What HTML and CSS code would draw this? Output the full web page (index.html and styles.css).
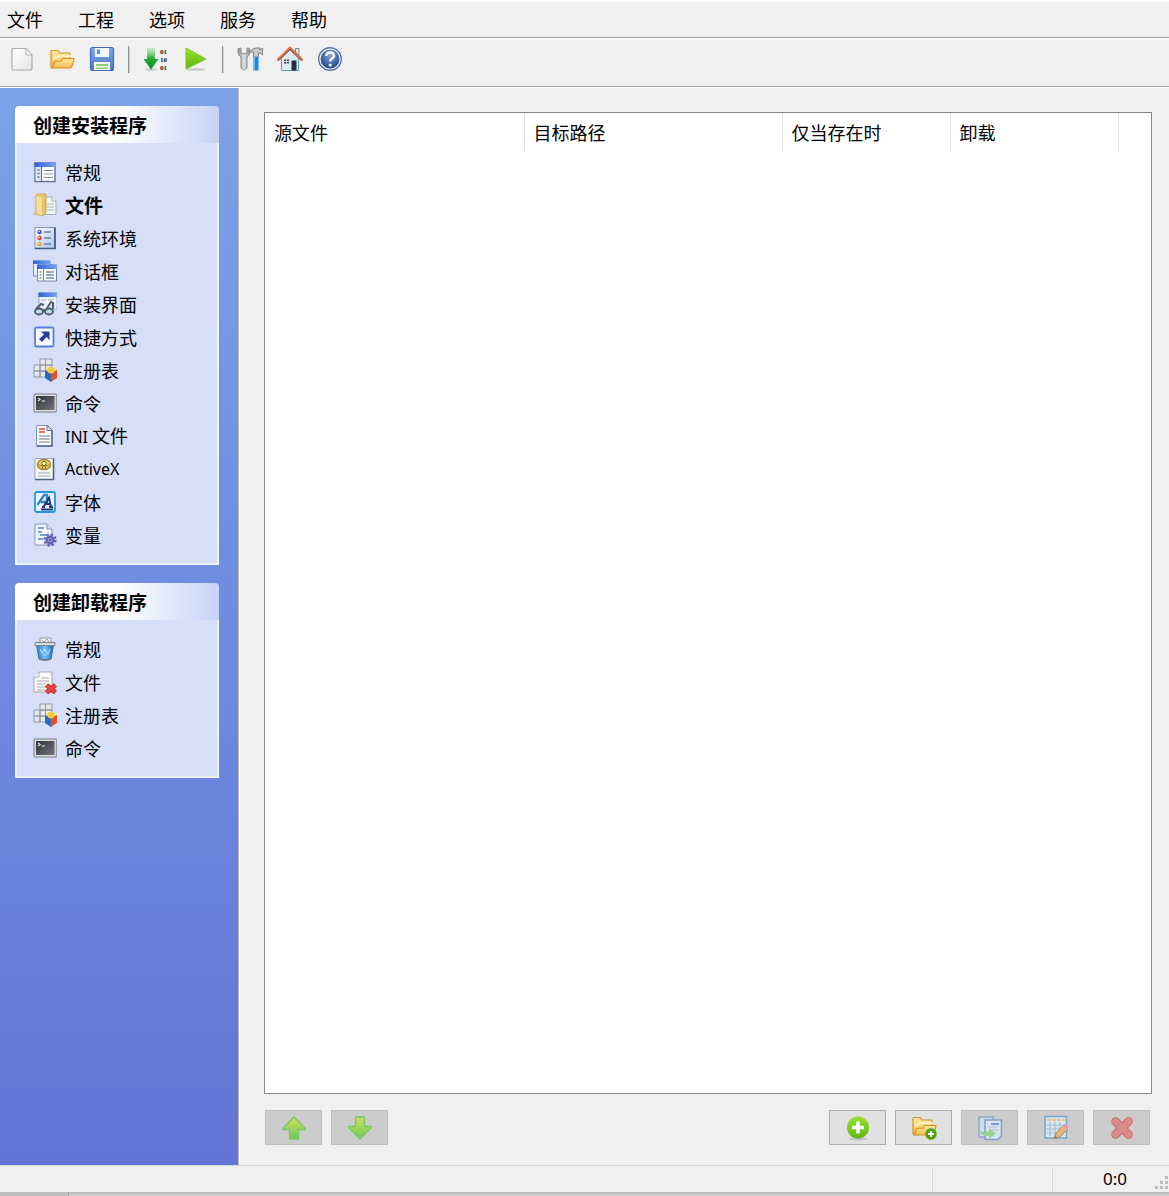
FILE: index.html
```html
<!DOCTYPE html>
<html lang="zh-CN">
<head>
<meta charset="utf-8">
<meta name="viewport" content="width=device-width, initial-scale=1">
<title>创建安装程序</title>
<link rel="stylesheet" href="styles.css">
</head>
<body>
<svg class="sprite" width="0" height="0" aria-hidden="true">
  <defs>
    <linearGradient id="g-paper" x1="0" y1="0" x2="1" y2="1"><stop offset="0" stop-color="#fff"/><stop offset="1" stop-color="#e6e6e6"/></linearGradient>
    <linearGradient id="g-folder" x1="0" y1="0" x2="0" y2="1"><stop offset="0" stop-color="#ffe9a3"/><stop offset="1" stop-color="#f7bd50"/></linearGradient>
    <linearGradient id="g-leaf" x1="0" y1="0" x2="1" y2="0"><stop offset="0" stop-color="#fbe6a6"/><stop offset="1" stop-color="#e3b95a"/></linearGradient>
    <linearGradient id="g-blue" x1="0" y1="0" x2="0" y2="1"><stop offset="0" stop-color="#7fa8e6"/><stop offset="1" stop-color="#4a78c8"/></linearGradient>
    <linearGradient id="g-down" x1="0" y1="0" x2="0" y2="1"><stop offset="0" stop-color="#8be08e" stop-opacity=".4"/><stop offset=".5" stop-color="#1fae31"/><stop offset="1" stop-color="#128a22"/></linearGradient>
    <linearGradient id="g-play" x1="0" y1="0" x2="0" y2="1"><stop offset="0" stop-color="#9be02c"/><stop offset="1" stop-color="#5cb811"/></linearGradient>
    <linearGradient id="g-steel" x1="0" y1="0" x2="1" y2="0"><stop offset="0" stop-color="#8a8a8a"/><stop offset=".5" stop-color="#e2e2e2"/><stop offset="1" stop-color="#8a8a8a"/></linearGradient>
    <linearGradient id="g-title" x1="0" y1="0" x2="1" y2="0"><stop offset="0" stop-color="#2f62d8"/><stop offset="1" stop-color="#78a4f2"/></linearGradient>
    <linearGradient id="g-arrow" x1="0" y1="0" x2="0" y2="1"><stop offset="0" stop-color="#d3e05a"/><stop offset="1" stop-color="#6cc95f"/></linearGradient>
    <linearGradient id="g-list" x1="0" y1="0" x2="1" y2="1"><stop offset="0" stop-color="#fff"/><stop offset="1" stop-color="#a9c4ee"/></linearGradient>
    <linearGradient id="g-screen" x1="0" y1="0" x2="1" y2="1"><stop offset="0" stop-color="#2f3138"/><stop offset="1" stop-color="#73757e"/></linearGradient>
    <linearGradient id="g-bin" x1="0" y1="0" x2="1" y2="0"><stop offset="0" stop-color="#2e7bd0"/><stop offset=".5" stop-color="#6cc0f7"/><stop offset="1" stop-color="#2064b8"/></linearGradient>
    <radialGradient id="g-help" cx=".5" cy=".3" r=".7"><stop offset="0" stop-color="#7fa5da"/><stop offset="1" stop-color="#1f4488"/></radialGradient>
  </defs>

  <symbol id="i-new" viewBox="0 0 26 26"><path d="M4 2.500H17L23 9V22Q23 24 21 24H4.500Q3 24 3 22.500V3.500Q3 2.500 4 2.500Z" fill="url(#g-paper)" stroke="#aaa" stroke-width="1.200"/><path d="M17 2.500V9H23Z" fill="#fff" stroke="#b5b5b5"/></symbol>

  <symbol id="i-open" viewBox="0 0 26 26"><path d="M2 21V5.500Q2 4.500 3 4.500H9L11 7H20Q21 7 21 8V21Z" fill="url(#g-folder)" stroke="#d4922c" stroke-width="1.200"/><path d="M4 13L10 10H22" fill="none" stroke="#fff3c4" stroke-width="2"/><path d="M3 22Q5 20 5.500 15.500L12 15L14 12.500H25Q24 20 21.500 22Z" fill="url(#g-folder)" stroke="#d4922c" stroke-width="1.200"/></symbol>

  <symbol id="i-save" viewBox="0 0 26 26"><rect x="1.500" y="1.500" width="23" height="23" rx="2" fill="url(#g-blue)" stroke="#3f6cb8" stroke-width="1.200"/><path d="M6 2H20V11H6Z" fill="#f3f7fe"/><path d="M8 3.500H11V8H8Z" fill="#5f8cd6"/><path d="M5 16H21V24H5Z" fill="#f4f8f1"/><path d="M7 18H19V20H7ZM7 21.500H19V23H7Z" fill="#8ccb72"/></symbol>

  <symbol id="i-run" viewBox="0 0 26 26"><ellipse cx="13" cy="23.500" rx="10" ry="1.500" fill="#000" opacity=".15"/><path d="M3 2L23 13L3 23Z" fill="url(#g-play)" stroke="#7ccb1e" stroke-linejoin="round"/></symbol>

  <symbol id="i-tools" viewBox="0 0 26 26"><path d="M1.500 2.500Q-.5 8 4 11V22Q7 26 10 22V11Q14.500 8 12.500 2.500L10 2V6.500L7 8L4 6.500V2Z" fill="url(#g-steel)" stroke="#8b8b8b"/><path d="M13 6Q15 2 19 2H23V4L25.500 2V9L23 7H21.500V11H16.500V6Z" fill="#c8c8c8" stroke="#858585"/><path d="M16.500 11H21.500V24.500H16.500Z" fill="#1c86ee"/><path d="M16.500 11H18V24.500H16.500Z" fill="#6bc0ff"/></symbol>

  <symbol id="i-home" viewBox="0 0 26 26"><path d="M18.500 2.500H22V9H18.500Z" fill="#e8e2de" stroke="#98806f"/><path d="M4.500 12L13 4L21.500 12V24.500H4.500Z" fill="#dceaf5" stroke="#5c9ed0"/><path d="M1.500 13.500L13 2L24.500 13.500" fill="none" stroke="#b9552c" stroke-width="2.600" stroke-linecap="round"/><path d="M1.500 13L13 1.700L24.500 13" fill="none" stroke="#eea47c" stroke-width=".8"/><path d="M14.500 14.500H19.500V24.500H14.500Z" fill="#252e3a"/><path d="M7 13.500H12V17.500H7Z" fill="#3a4a5a"/><path d="M9.500 13.500V17.500M7 15.500H12" stroke="#dde"/></symbol>

  <symbol id="i-help" viewBox="0 0 26 26"><circle cx="13" cy="13" r="11.300" fill="#fff" stroke="#5475ab" stroke-width="1.400"/><circle cx="13" cy="13" r="9.500" fill="url(#g-help)"/><path d="M9.500 10Q9.500 6.500 13.200 6.500T16.800 9.700Q16.800 11.800 14.500 12.800Q13.200 13.500 13.200 15.500" fill="none" stroke="#fff" stroke-width="2.500"/><circle cx="13.200" cy="19" r="1.600" fill="#fff"/></symbol>

  <symbol id="i-form" viewBox="0 0 24 24"><rect x="2" y="3" width="20" height="18.500" fill="#fff" stroke="#5c7396" stroke-width="1.400"/><path d="M1.500 2.500H22.500V7H1.500Z" fill="url(#g-title)"/><path d="M2.700 7H8V21H2.700Z" fill="#dfe8f6"/><path d="M8.500 7V21" stroke="#4b6a97"/><path d="M4.500 10H6.500M4.500 13.500H6.500M4.500 17H6.500" stroke="#4e6fa5" stroke-width="1.500"/><path d="M10.500 10.500H20M10.500 14H20M10.500 17.500H20" stroke="#8294b0" stroke-width="1.200"/></symbol>

  <symbol id="i-files" viewBox="0 0 24 24"><path d="M10 4H19L23 8V21.500H10Z" fill="#edf5f3" stroke="#98b4b4"/><path d="M19 4V8H23" fill="#fff" stroke="#98b4b4"/><path d="M14 11H21M14 14H21M14 17H21" stroke="#9bbcbd"/><path d="M0 21L4 17V22Z" fill="#aeb0a0" opacity=".7"/><path d="M3 2L5 1H13V20L10 23L3 21Z" fill="url(#g-leaf)" stroke="#d2a84e"/><path d="M3 2L9.500 4V23L3 21Z" fill="#f7dd97" stroke="#dcba6b"/></symbol>

  <symbol id="i-env" viewBox="0 0 24 24"><rect x="2" y="1.500" width="20" height="21" fill="url(#g-list)" stroke="#8398b6"/><path d="M22 1.500V22.500H2" fill="none" stroke="#3f5c85" stroke-width="1.700"/><circle cx="6.500" cy="6" r="2.200" fill="#4646dc"/><circle cx="6.500" cy="12" r="2.200" fill="#e0432b"/><circle cx="6.500" cy="18" r="2.200" fill="#dda32b"/><circle cx="6" cy="5.500" r=".8" fill="#fff"/><circle cx="6" cy="11.500" r=".8" fill="#fff"/><circle cx="6" cy="17.500" r=".8" fill="#fff"/><path d="M11 6H18M11 12H18M11 18H18" stroke="#6f7f9b" stroke-width="1.300"/></symbol>

  <symbol id="i-dialog" viewBox="0 0 24 24"><path d="M.500 2H17V17H.500Z" fill="#e7effc" stroke="#6d90d0"/><path d="M0 1.500H17V5H0Z" fill="url(#g-title)"/><path d="M4.500 6H23.500V22H4.500Z" fill="#fff" stroke="#6683b0"/><path d="M4 5.500H24V10H4Z" fill="url(#g-title)"/><path d="M10.500 10V22" stroke="#6683b0"/><path d="M6.500 13H8.500M6.500 16H8.500M6.500 19H8.500M13 13H21M13 16H21M13 19H21" stroke="#6f8eb9" stroke-width="1.300"/></symbol>

  <symbol id="i-ui" viewBox="0 0 24 24"><path d="M6 1H24V17H6Z" fill="#eff5ff" stroke="#91abd8"/><path d="M5.500 .500H24V5H5.500Z" fill="url(#g-title)"/><path d="M8 8H13M15 8H21M17 11H22M17 14H22" stroke="#a1b3d2"/><path d="M3 17L8 12L11 13M14 16L18 10L20 11V17" fill="none" stroke="#57606e" stroke-width="2"/><ellipse cx="6" cy="19.500" rx="4" ry="3" fill="#b8ddf2" stroke="#4d5561" stroke-width="1.800"/><ellipse cx="16" cy="19.500" rx="4" ry="3" fill="#b8ddf2" stroke="#4d5561" stroke-width="1.800"/><path d="M10 18.500H12" stroke="#4d5561" stroke-width="2"/></symbol>

  <symbol id="i-shortcut" viewBox="0 0 24 24"><rect x="2" y="2.500" width="18.500" height="19" rx="1.500" fill="#f6f8ff" stroke="#5b7bdd" stroke-width="1.800"/><path d="M8 6.500H16.500V15L13.500 12L9 17L6 14L11 9.500Z" fill="#263e9e"/></symbol>

  <symbol id="i-registry" viewBox="0 0 24 24"><g fill="#e5e9ee" stroke="#8c97a8"><path d="M7 1H12.500V7H7ZM12.500 1H19V7H12.500ZM1 7H7V13H1ZM7 7H12.500V13H7ZM12.500 7H19V13H12.500ZM1 13H7V19H1ZM7 13H12.500V19H7Z"/></g><path d="M12 12L18 9L24 12L18 15Z" fill="#ffdc54"/><path d="M12 12L18 15V24L12 20Z" fill="#3564bd"/><path d="M18 15L24 12V20L18 24Z" fill="#e65024"/><circle cx="18" cy="12" r="3.500" fill="#f7c93d"/></symbol>

  <symbol id="i-command" viewBox="0 0 24 24"><rect x="1" y="3" width="22.500" height="18" rx="1" fill="#dedfe0" stroke="#999ca3" stroke-width="1.500"/><rect x="3" y="5" width="18.500" height="14" fill="url(#g-screen)"/><path d="M5 7L7 8.500L5 10M8.500 10H12" fill="none" stroke="#eee" stroke-width="1.200"/></symbol>

  <symbol id="i-ini" viewBox="0 0 24 24"><path d="M3.500 1.500H14L19 6.500V22H3.500Z" fill="#fbfbfe" stroke="#8293b2"/><path d="M14 1.500L19 6.500V22H4" fill="none" stroke="#4b6489" stroke-width="1.400"/><path d="M14 1.500V6.500H19" fill="#dbe4f2" stroke="#5a7194"/><path d="M6 5H12M6 8H12" stroke="#ef7457" stroke-width="2"/><path d="M6 12H17M6 15H17M6 18H17" stroke="#9aa6b8" stroke-width="1.300"/></symbol>

  <symbol id="i-activex" viewBox="0 0 24 24"><path d="M2 1.500H20.500V22.500H2Z" fill="#f8f9fb" stroke="#9aa7b9"/><path d="M20.500 1.500V22.500H2" fill="none" stroke="#4d6180" stroke-width="1.600"/><ellipse cx="11" cy="7.500" rx="6.500" ry="5" fill="#efd569" stroke="#a98822" stroke-width="1.500"/><circle cx="11" cy="6.500" r="2.200" fill="#fff6ca" stroke="#6f5612"/><path d="M6 8L10 9L9 12M16 8L12 9L13 12" fill="none" stroke="#8b6b17"/><path d="M5 16H17M5 19H17" stroke="#9ba5b3" stroke-width="1.200"/></symbol>

  <symbol id="i-font" viewBox="0 0 24 24"><rect x="2" y="2" width="20" height="20" rx="2" fill="#eef7ff" stroke="#2396e2" stroke-width="1.800"/><path d="M4.500 15L11 5H14V15M8 12H13" fill="none" stroke="#3286d2" stroke-width="2.300"/><path d="M10.500 17L16 7.500L18 17M12 14H18M9 17H12M16 17H20M8 19.500H20" fill="none" stroke="#24367e" stroke-width="1.900"/></symbol>

  <symbol id="i-variable" viewBox="0 0 24 24"><path d="M2 1H14L19 6V22H2Z" fill="#f3f7ff" stroke="#8095bd"/><path d="M14 1V6H19" fill="#d5e0f7" stroke="#8095bd"/><path d="M5 5H11M5 9H9M7 12H15M5 16H10" stroke="#4e81d8" stroke-width="1.600"/><circle cx="17" cy="17" r="5.300" fill="none" stroke="#6565b8" stroke-width="2.600" stroke-dasharray="2.300 1.860"/><circle cx="17" cy="17" r="3.300" fill="#aeb0e8" stroke="#6464b5" stroke-width="2.500"/><circle cx="17" cy="17" r="1.200" fill="#5253a5"/></symbol>

  <symbol id="i-bin" viewBox="0 0 24 24"><path d="M7 1H18V7H7Z" fill="#eef1f3" stroke="#929da8"/><path d="M9 3L11 5L14 2L16 5" fill="none" stroke="#9aa4ad"/><path d="M3.500 8H20.500L18 22Q11 24 6 22Z" fill="url(#g-bin)" stroke="#386a9f"/><path d="M2 5.500H22V8.500H2Z" fill="#dadddf" stroke="#7d8791"/><path d="M7 12L9 16L12 12L15 17L17 12M10 18H14" fill="none" stroke="#c6edff" stroke-width="1.200" opacity=".8"/><path d="M6 22Q12 24 18 22" stroke="#777" fill="none" stroke-width="1.500"/></symbol>

  <symbol id="i-file-remove" viewBox="0 0 24 24"><path d="M6 2H19V22H1V7Z" fill="#fafafa" stroke="#a7a7a7"/><path d="M6 2V7H1" fill="#fff" stroke="#a7a7a7"/><path d="M8 8H16M4 11H16M4 14H13M4 17H12M4 20H12" stroke="#aaa"/><path d="M13.500 15L22.500 22.500M22.500 15L13.500 22.500" stroke="#c4242c" stroke-width="4.800"/><path d="M14 15.500L22 22M22 15.500L14 22" stroke="#f04444" stroke-width="2.800"/></symbol>

  <symbol id="i-up" viewBox="0 0 26 26"><path d="M13 2L24 13V14.500H17.500V24H8.500V14.500H2V13Z" fill="url(#g-arrow)" stroke="#79c865" stroke-width="1.400" stroke-linejoin="round"/></symbol>
  <symbol id="i-down" viewBox="0 0 26 26"><path d="M13 24L24 13V11.500H17.500V2H8.500V11.500H2V13Z" fill="url(#g-arrow)" stroke="#79c865" stroke-width="1.400" stroke-linejoin="round"/></symbol>

  <symbol id="i-add" viewBox="0 0 26 26"><ellipse cx="13" cy="24" rx="10" ry="1.500" fill="#000" opacity=".12"/><circle cx="13" cy="12.500" r="11" fill="url(#g-play)"/><path d="M13 6.500V18.500M7 12.500H19" stroke="#fff" stroke-width="3.600"/></symbol>

  <symbol id="i-folder-add" viewBox="0 0 26 26"><use href="#i-open" x="0" y="-2" width="26" height="26"/><circle cx="20" cy="19" r="5.700" fill="#4e9c13" stroke="#8bc34a" stroke-width=".8"/><path d="M20 16V22M17 19H23" stroke="#fff" stroke-width="1.800"/></symbol>

  <symbol id="i-copy" viewBox="0 0 26 26"><path d="M2 2H16V22H2Z" fill="#ccdaea" stroke="#8ba8cb" stroke-width="1.400"/><path d="M8 5H24.500V21L21 24.500H8Z" fill="#d9e3ef" stroke="#819fc6" stroke-width="1.500"/><path d="M14 9H22" stroke="#779bc8" stroke-width="2"/><path d="M10 12H22M12 15H22" stroke="#b3c5da"/><path d="M2 15Q6 19 12 16V13L19 18.500L12 24V21Q5 22 2 15Z" fill="#98d391"/></symbol>

  <symbol id="i-edit" viewBox="0 0 26 26"><path d="M2 1.500H23.500V23H2Z" fill="#dbe5ed" stroke="#77a7c3" stroke-width="1.500"/><path d="M4 5H22" stroke="#dcbc74" stroke-width="1.600" stroke-dasharray="4 1"/><path d="M3 10H23M3 14H23M3 18H18M7 7V21M12 7V21M17 7V18" stroke="#a0bed4" stroke-width="1.200"/><path d="M11 24L13 18L21 10L25 14L17 22Z" fill="#e5b578" stroke="#a99075"/><path d="M20 11L22.500 8.500L26 12L24 14.500Z" fill="#d8a0b5"/><path d="M11 24L12 20.500L15 23Z" fill="#8b8178"/></symbol>

  <symbol id="i-delete" viewBox="0 0 26 26"><path d="M6.500 6.500L19.500 19.500M19.500 6.500L6.500 19.500" stroke="#c66e70" stroke-width="8.500" stroke-linecap="round"/><path d="M6.500 6.500L19.500 19.500M19.500 6.500L6.500 19.500" stroke="#dc8a8b" stroke-width="6.500" stroke-linecap="round"/></symbol>

  <symbol id="i-grip" viewBox="0 0 14 14"><path d="M10 0H13V3H10ZM5 5H8V8H5ZM10 5H13V8H10ZM0 10H3V13H0ZM5 10H8V13H5ZM10 10H13V13H10Z" fill="#bdbdbd"/></symbol>
</svg>

<div class="app">
  <nav class="menubar" aria-label="菜单">
    <button type="button" class="menu-item">文件</button>
    <button type="button" class="menu-item">工程</button>
    <button type="button" class="menu-item">选项</button>
    <button type="button" class="menu-item">服务</button>
    <button type="button" class="menu-item">帮助</button>
  </nav>

  <div class="toolbar" role="toolbar">
    <button type="button" class="tool" aria-label="新建"><svg class="tool-icon"><use href="#i-new"/></svg></button>
    <button type="button" class="tool" aria-label="打开"><svg class="tool-icon"><use href="#i-open"/></svg></button>
    <button type="button" class="tool" aria-label="保存"><svg class="tool-icon"><use href="#i-save"/></svg></button>
    <span class="tool-sep"></span>
    <button type="button" class="tool" aria-label="编译">
      <svg class="tool-icon" viewBox="0 0 26 26"><ellipse cx="8" cy="23.500" rx="6" ry="1.500" fill="#000" opacity=".15"/><path d="M4 2H12V13H15.500L8 23.500L.5 13H4Z" fill="url(#g-down)"/><g class="bits"><text x="17" y="8">01</text><text x="17" y="16">10</text><text x="17" y="24">01</text></g></svg>
    </button>
    <button type="button" class="tool" aria-label="运行"><svg class="tool-icon"><use href="#i-run"/></svg></button>
    <span class="tool-sep"></span>
    <button type="button" class="tool" aria-label="设置"><svg class="tool-icon"><use href="#i-tools"/></svg></button>
    <button type="button" class="tool" aria-label="主页"><svg class="tool-icon"><use href="#i-home"/></svg></button>
    <button type="button" class="tool" aria-label="帮助"><svg class="tool-icon"><use href="#i-help"/></svg></button>
  </div>

  <div class="workspace">
    <aside class="sidebar">
      <section class="group">
        <h2 class="group-title">创建安装程序</h2>
        <ul class="group-list">
          <li><a class="entry" href="#"><svg class="entry-icon"><use href="#i-form"/></svg>常规</a></li>
          <li><a class="entry entry-current" href="#" aria-current="page"><svg class="entry-icon"><use href="#i-files"/></svg>文件</a></li>
          <li><a class="entry" href="#"><svg class="entry-icon"><use href="#i-env"/></svg>系统环境</a></li>
          <li><a class="entry" href="#"><svg class="entry-icon"><use href="#i-dialog"/></svg>对话框</a></li>
          <li><a class="entry" href="#"><svg class="entry-icon"><use href="#i-ui"/></svg>安装界面</a></li>
          <li><a class="entry" href="#"><svg class="entry-icon"><use href="#i-shortcut"/></svg>快捷方式</a></li>
          <li><a class="entry" href="#"><svg class="entry-icon"><use href="#i-registry"/></svg>注册表</a></li>
          <li><a class="entry" href="#"><svg class="entry-icon"><use href="#i-command"/></svg>命令</a></li>
          <li><a class="entry" href="#"><svg class="entry-icon"><use href="#i-ini"/></svg><span><span class="latin">INI</span> 文件</span></a></li>
          <li><a class="entry" href="#"><svg class="entry-icon"><use href="#i-activex"/></svg><span class="latin">ActiveX</span></a></li>
          <li><a class="entry" href="#"><svg class="entry-icon"><use href="#i-font"/></svg>字体</a></li>
          <li><a class="entry" href="#"><svg class="entry-icon"><use href="#i-variable"/></svg>变量</a></li>
        </ul>
      </section>
      <section class="group">
        <h2 class="group-title">创建卸载程序</h2>
        <ul class="group-list">
          <li><a class="entry" href="#"><svg class="entry-icon"><use href="#i-bin"/></svg>常规</a></li>
          <li><a class="entry" href="#"><svg class="entry-icon"><use href="#i-file-remove"/></svg>文件</a></li>
          <li><a class="entry" href="#"><svg class="entry-icon"><use href="#i-registry"/></svg>注册表</a></li>
          <li><a class="entry" href="#"><svg class="entry-icon"><use href="#i-command"/></svg>命令</a></li>
        </ul>
      </section>
    </aside>

    <main class="content">
      <div class="file-list">
        <table class="file-table">
          <colgroup><col class="col-source"><col class="col-target"><col class="col-flag"><col class="col-flag"><col></colgroup>
          <thead>
            <tr><th scope="col">源文件</th><th scope="col">目标路径</th><th scope="col">仅当存在时</th><th scope="col">卸载</th><td></td></tr>
          </thead>
        </table>
      </div>
      <div class="actions">
        <button type="button" class="action" aria-label="上移" disabled><svg class="action-icon"><use href="#i-up"/></svg></button>
        <button type="button" class="action" aria-label="下移" disabled><svg class="action-icon"><use href="#i-down"/></svg></button>
        <span class="spacer"></span>
        <button type="button" class="action" aria-label="添加文件"><svg class="action-icon"><use href="#i-add"/></svg></button>
        <button type="button" class="action" aria-label="添加文件夹"><svg class="action-icon"><use href="#i-folder-add"/></svg></button>
        <button type="button" class="action" aria-label="复制" disabled><svg class="action-icon"><use href="#i-copy"/></svg></button>
        <button type="button" class="action" aria-label="编辑" disabled><svg class="action-icon"><use href="#i-edit"/></svg></button>
        <button type="button" class="action" aria-label="删除" disabled><svg class="action-icon"><use href="#i-delete"/></svg></button>
      </div>
    </main>
  </div>

  <footer class="statusbar">
    <span class="status-main"></span>
    <span class="status-cell"></span>
    <span class="status-cell status-pos">0:0</span>
    <svg class="grip" aria-hidden="true"><use href="#i-grip"/></svg>
  </footer>
  <div class="window-edge"><span class="window-edge-tab"></span></div>
</div>
</body>
</html>
```
FILE: styles.css
```css
* {
  box-sizing: border-box;
}

body {
  margin: 0;
  background: #f0f0f0;
  color: #000;
  font: 18px/24px "Noto Sans CJK SC", "Noto Sans", sans-serif;
}

button {
  font: inherit;
  color: inherit;
}

.sprite {
  position: absolute;
}

.app {
  display: flex;
  flex-direction: column;
  min-height: 100vh;
}

.menubar {
  display: flex;
  gap: 35px;
  padding: 5px 7px 6px;
  border-top: 2px solid #fff;
  border-bottom: 1px solid #a5a5a5;
}

.menu-item {
  padding: 0;
  border: 0;
  background: none;
}

.toolbar {
  display: flex;
  align-items: center;
  height: 49px;
  padding: 0 2px 8px;
  border-top: 2px solid #fafafa;
  border-bottom: 1px solid #a5a5a5;
}

.tool {
  display: flex;
  align-items: center;
  justify-content: center;
  width: 40px;
  height: 36px;
  padding: 0;
  border: 0;
  background: none;
}

.tool-icon {
  width: 26px;
  height: 26px;
}

.bits {
  fill: #222;
  font: 700 7px/8px "Liberation Serif", serif;
}

.tool-sep {
  width: 2px;
  height: 27px;
  margin: 0 6px;
  border-left: 1px solid #8c8c8c;
  border-right: 1px solid #d8d8d8;
}

.workspace {
  display: flex;
  flex: 1;
  border-top: 1px solid #fafafa;
}

.sidebar {
  display: flex;
  flex-direction: column;
  gap: 18px;
  width: 239px;
  padding: 18px 19px 18px 15px;
  border-right: 1px solid #b4b4b4;
  background: linear-gradient(#7ba2e7, #6375d6);
}

.group-title {
  margin: 0;
  padding: 7px 18px 6px;
  border-radius: 4px 4px 0 0;
  background: linear-gradient(to right, #fff 50%, #c6d3f7);
  font-size: 19px;
  line-height: 24px;
  font-weight: 700;
}

.group-list {
  margin: 0;
  padding: 14px 16px 10px;
  border: 2px solid #eef2fd;
  border-top: 0;
  background: #d6dff7;
  list-style: none;
}

.entry {
  display: flex;
  align-items: center;
  gap: 8px;
  height: 33px;
  padding-bottom: 3px;
  color: #000;
  text-decoration: none;
}

.entry-current {
  font-size: 19px;
  font-weight: 700;
}

.entry-icon {
  flex: none;
  width: 24px;
  height: 24px;
}

.latin {
  font-family: "Noto Sans", sans-serif;
  font-size: 16px;
}

.content {
  display: flex;
  flex: 1;
  flex-direction: column;
  gap: 16px;
  min-width: 0;
  padding: 24px 17px 20px 24px;
  border-left: 1px solid #fff;
}

.file-list {
  flex: 1;
  border: 1px solid #828790;
  background: #fff;
}

.file-table {
  width: 100%;
  border-collapse: collapse;
  table-layout: fixed;
}

.col-source {
  width: 259px;
}

.col-target {
  width: 258px;
}

.col-flag {
  width: 168px;
}

.file-table th {
  height: 38px;
  padding: 0 9px;
  border-right: 1px solid #e2e2e2;
  font-weight: 400;
  text-align: left;
  white-space: nowrap;
}

.actions {
  display: flex;
  gap: 9px;
  padding: 0 2px 0 1px;
}

.spacer {
  flex: 1;
}

.action {
  display: flex;
  align-items: center;
  justify-content: center;
  width: 57px;
  height: 35px;
  padding: 0;
  border: 1px solid #adadad;
  background: #e1e1e1;
}

.action:disabled {
  border-color: #bfbfbf;
  background: #ccc;
}

.action-icon {
  width: 26px;
  height: 26px;
}

.statusbar {
  display: flex;
  align-items: stretch;
  height: 27px;
  border-top: 1px solid #d7d7d7;
}

.status-main {
  flex: 1;
}

.status-cell {
  width: 120px;
  margin-top: 2px;
  border-left: 1px solid #d7d7d7;
}

.status-pos {
  width: 103px;
  padding-right: 28px;
  font: 17px/22px "Noto Sans", sans-serif;
  text-align: right;
}

.grip {
  align-self: flex-end;
  width: 14px;
  height: 14px;
  margin-bottom: 2px;
}

.window-edge {
  height: 4px;
  background: linear-gradient(#b8b8b8, #d2d2d2);
}

.window-edge-tab {
  display: block;
  width: 69px;
  height: 4px;
  border-right: 1px solid #a5a5a5;
  background: #bdbdbd;
}
```
